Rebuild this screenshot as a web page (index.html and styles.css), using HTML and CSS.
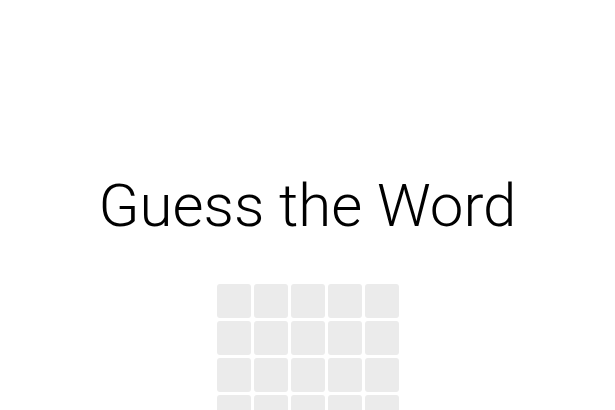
FILE: index.html
```html
<!doctype html>
<html lang="en">
<head>
    <meta charset="UTF-8">
    <meta name="viewport" content="width=device-width, initial-scale=1.0">
    <title>Guess the Word</title>
    <link rel="stylesheet" href="styles.css">
</head>
<body>

<div id="app">
    <header class="title">Guess the Word</header>
    <!-- 6 guesses x 5 letters -->
    <section class="board">
        <div class="tile"></div><div class="tile"></div><div class="tile"></div><div class="tile"></div><div class="tile"></div>
        <div class="tile"></div><div class="tile"></div><div class="tile"></div><div class="tile"></div><div class="tile"></div>
        <div class="tile"></div><div class="tile"></div><div class="tile"></div><div class="tile"></div><div class="tile"></div>
        <div class="tile"></div><div class="tile"></div><div class="tile"></div><div class="tile"></div><div class="tile"></div>
        <div class="tile"></div><div class="tile"></div><div class="tile"></div><div class="tile"></div><div class="tile"></div>
        <div class="tile"></div><div class="tile"></div><div class="tile"></div><div class="tile"></div><div class="tile"></div>
    </section>
</div>

</body>
</html>
```

FILE: styles.css
```css
* {
    margin: 0;
    padding: 0;
}

html, body, #app {
    width: 100%;
    height: 100%;
    overflow: hidden;
    background: #fff;
}

#app {
    display: flex;
    flex-direction: column;
    align-items: center;
    padding-top: 168px;
    box-sizing: border-box;
}

.title {
    font-family: Roboto, "Liberation Sans", sans-serif;
    font-weight: 300;
    font-size: 60px;
    line-height: 76px;
    color: #000;
    text-align: center;
}

.board {
    margin-top: 40px;
    display: grid;
    grid-template-columns: repeat(5, 34px);
    grid-auto-rows: 34px;
    gap: 3px;
}

.board .tile {
    background: #ebebeb;
    border-radius: 3px;
}
```
